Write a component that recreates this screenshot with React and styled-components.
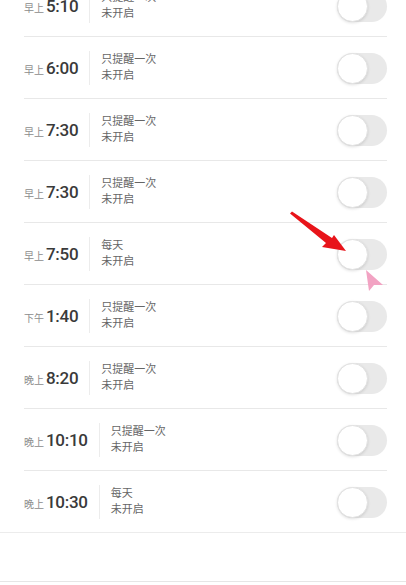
import React from "react";
import styled, { createGlobalStyle } from "styled-components";

const Global = createGlobalStyle`
  html, body { margin: 0; padding: 0; background: #fff; }
  body { font-family: Roboto, "Noto Sans CJK SC", sans-serif; }
`;

const Page = styled.div`
  position: relative;
  width: 406px;
  height: 585px;
  overflow: hidden;
  background: #fff;
`;

const List = styled.div`
  margin-top: -25px;
  padding: 0 19px 0 24px;
  border-bottom: 1px solid #ececec;
`;

const Row = styled.div`
  box-sizing: border-box;
  height: ${(p) => (p.$last ? "61px" : "62px")};
  display: flex;
  align-items: center;
  border-bottom: ${(p) => (p.$last ? "none" : "1px solid #e8e8e8")};
`;

const Time = styled.div`
  display: flex;
  align-items: baseline;
  gap: 2px;
`;

const Period = styled.span`
  font-size: 10px;
  color: #8c8c8c;
`;

const Clock = styled.span`
  font-size: 17px;
  font-weight: 500;
  letter-spacing: -0.3px;
  color: #3a3a3a;
`;

const Divider = styled.div`
  width: 1px;
  height: 34px;
  background: #ececec;
  margin: 0 11px;
`;

const Info = styled.div`
  flex: 1;
  display: flex;
  flex-direction: column;
  font-size: 11px;
  line-height: 16px;
  color: #666;
`;

const Track = styled.div`
  position: relative;
  box-sizing: border-box;
  width: 50px;
  height: 31px;
  border-radius: 16px;
  background: #e9e9e9;
  margin-top: 2px;
`;

const Knob = styled.div`
  position: absolute;
  left: 0;
  top: 0;
  box-sizing: border-box;
  width: 31px;
  height: 31px;
  border-radius: 50%;
  background: #fff;
  border: 1px solid #e2e2e2;
  box-shadow: 0 1px 3px rgba(0, 0, 0, 0.12);
`;

const Footer = styled.div`
  height: 48px;
  border-bottom: 1px solid #e6e6e6;
`;

const Overlay = styled.svg`
  position: absolute;
  left: 0;
  top: 0;
  pointer-events: none;
`;

const alarms = [
  ["早上", "5:10", "只提醒一次"],
  ["早上", "6:00", "只提醒一次"],
  ["早上", "7:30", "只提醒一次"],
  ["早上", "7:30", "只提醒一次"],
  ["早上", "7:50", "每天"],
  ["下午", "1:40", "只提醒一次"],
  ["晚上", "8:20", "只提醒一次"],
  ["晚上", "10:10", "只提醒一次"],
  ["晚上", "10:30", "每天"],
];

function Toggle() {
  return (
    <Track>
      <Knob />
    </Track>
  );
}

export default function App() {
  return (
    <Page>
      <Global />
      <List>
        {alarms.map(([p, t, r], i) => (
          <Row key={i} $last={i === alarms.length - 1}>
            <Time>
              <Period>{p}</Period>
              <Clock>{t}</Clock>
            </Time>
            <Divider />
            <Info>
              <span>{r}</span>
              <span>未开启</span>
            </Info>
            <Toggle />
          </Row>
        ))}
      </List>
      <Footer />
      <Overlay width="406" height="585" viewBox="0 0 406 585">
        <path d="M290 213.5 L292 211.5 L332 238 L334 235 L346 251 L322 247 L326 243 Z" fill="#e8141a" />
        <path d="M366 270 L383 285 L374 285 L369 291 Z" fill="#f2a3c3" />
      </Overlay>
    </Page>
  );
}
